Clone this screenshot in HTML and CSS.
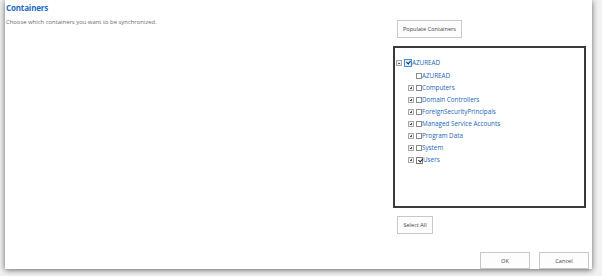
FILE: index.html
```html
<!DOCTYPE html>
<html lang="en">
<head>
  <meta charset="UTF-8">
  <title>Containers</title>
  <link rel="stylesheet" href="styles.css">
</head>
<body>
  <div class="frame">
    <div class="main">
      <div class="intro">
        <h1>Containers</h1>
        <p>Choose which containers you want to be synchronized.</p>
      </div>

      <div class="picker">
        <button class="btn populate">Populate Containers</button>

        <div class="tree">
          <div class="node root">
            <span class="toggle minus"></span>
            <span class="check on"></span>
            <span class="name">AZUREAD</span>
          </div>
          <div class="node child">
            <span class="toggle none"></span>
            <span class="check"></span>
            <span class="name">AZUREAD</span>
          </div>
          <div class="node child">
            <span class="toggle plus"></span>
            <span class="check"></span>
            <span class="name">Computers</span>
          </div>
          <div class="node child">
            <span class="toggle plus"></span>
            <span class="check"></span>
            <span class="name">Domain Controllers</span>
          </div>
          <div class="node child">
            <span class="toggle plus"></span>
            <span class="check"></span>
            <span class="name">ForeignSecurityPrincipals</span>
          </div>
          <div class="node child">
            <span class="toggle plus"></span>
            <span class="check"></span>
            <span class="name">Managed Service Accounts</span>
          </div>
          <div class="node child">
            <span class="toggle plus"></span>
            <span class="check"></span>
            <span class="name">Program Data</span>
          </div>
          <div class="node child">
            <span class="toggle plus"></span>
            <span class="check"></span>
            <span class="name">System</span>
          </div>
          <div class="node child">
            <span class="toggle plus"></span>
            <span class="check ticked"></span>
            <span class="name">Users</span>
          </div>
        </div>

        <button class="btn select-all">Select All</button>
      </div>
    </div>

    <div class="footer">
      <button class="btn wide">OK</button>
      <button class="btn wide">Cancel</button>
    </div>
  </div>
</body>
</html>
```

FILE: styles.css
```css
* {
  box-sizing: border-box;
}

body {
  margin: 0;
  height: 100vh;
  background: #f2f2f2;
  font-family: "Open Sans", "Noto Sans", sans-serif;
  overflow: hidden;
}

.frame {
  width: 587px;
  height: 269px;
  margin-left: 5px;
  background: #fff;
  box-shadow: 0 1px 6px rgba(0, 0, 0, 0.6);
  display: flex;
  flex-direction: column;
}

.main {
  flex: 1;
  display: flex;
  justify-content: space-between;
}

.intro {
  padding: 2px 0 0 1px;
}

.intro h1 {
  margin: 0;
  font-size: 8px;
  font-weight: 700;
  letter-spacing: -0.15px;
  color: #1b6ac2;
  line-height: 12px;
}

.intro p {
  margin: 4px 0 0;
  font-size: 5.9px;
  color: #6b6b6b;
  line-height: 8px;
}

.picker {
  width: 201px;
  padding-top: 20px;
  display: flex;
  flex-direction: column;
  align-items: flex-start;
}

.btn {
  font-family: inherit;
  font-size: 5.6px;
  color: #444;
  background: #fdfdfd;
  border: 1px solid #c8c8c8;
  padding: 0 5px;
  height: 18px;
  margin-left: 6px;
}

.populate {
  width: 65px;
  padding: 0;
}

.tree {
  width: 193px;
  height: 162px;
  margin: 8px 0 0 2px;
  border: 2px solid #3a3a3a;
  padding-top: 8px;
}

.node {
  display: flex;
  align-items: center;
  height: 12px;
  font-size: 6.3px;
  color: #2266b8;
}

.root {
  height: 13px;
  margin-bottom: 1px;
  padding-left: 1px;
}

.child {
  padding-left: 13px;
}

.toggle {
  width: 6px;
  height: 6px;
  margin-right: 2px;
  border: 1px solid #a8a8a8;
  background: #f0f0f0;
  position: relative;
}

.toggle.none {
  border: none;
  background: none;
}

.toggle.minus::before,
.toggle.plus::before,
.toggle.plus::after {
  content: "";
  position: absolute;
  background: #555;
}

.toggle.minus::before,
.toggle.plus::before {
  left: 1px;
  top: 2px;
  width: 2px;
  height: 1px;
}

.toggle.plus::after {
  left: 2px;
  top: 1px;
  width: 1px;
  height: 2px;
}

.check {
  width: 6px;
  height: 6px;
  border: 1px solid #8a8a8a;
  background: #fff;
  position: relative;
}

.check.on {
  width: 8px;
  height: 8px;
  border-color: #3d8ee0;
  background: #dcebfb;
}

.check.on::after,
.check.ticked::after {
  content: "";
  position: absolute;
  left: 1.5px;
  top: 0;
  width: 2px;
  height: 3px;
  border: solid #222;
  border-width: 0 1px 1px 0;
  transform: rotate(40deg);
}

.check.ticked {
  width: 7px;
  height: 7px;
  border-color: #7a7a7a;
}

.name {
  line-height: 12px;
}

.select-all {
  margin-top: 8px;
  height: 18px;
  width: 36px;
  padding: 0;
}

.footer {
  display: flex;
  justify-content: flex-end;
  gap: 9px;
  padding-right: 3px;
  height: 17px;
}

.wide {
  width: 50px;
  height: 17px;
  margin: 0;
}
```
